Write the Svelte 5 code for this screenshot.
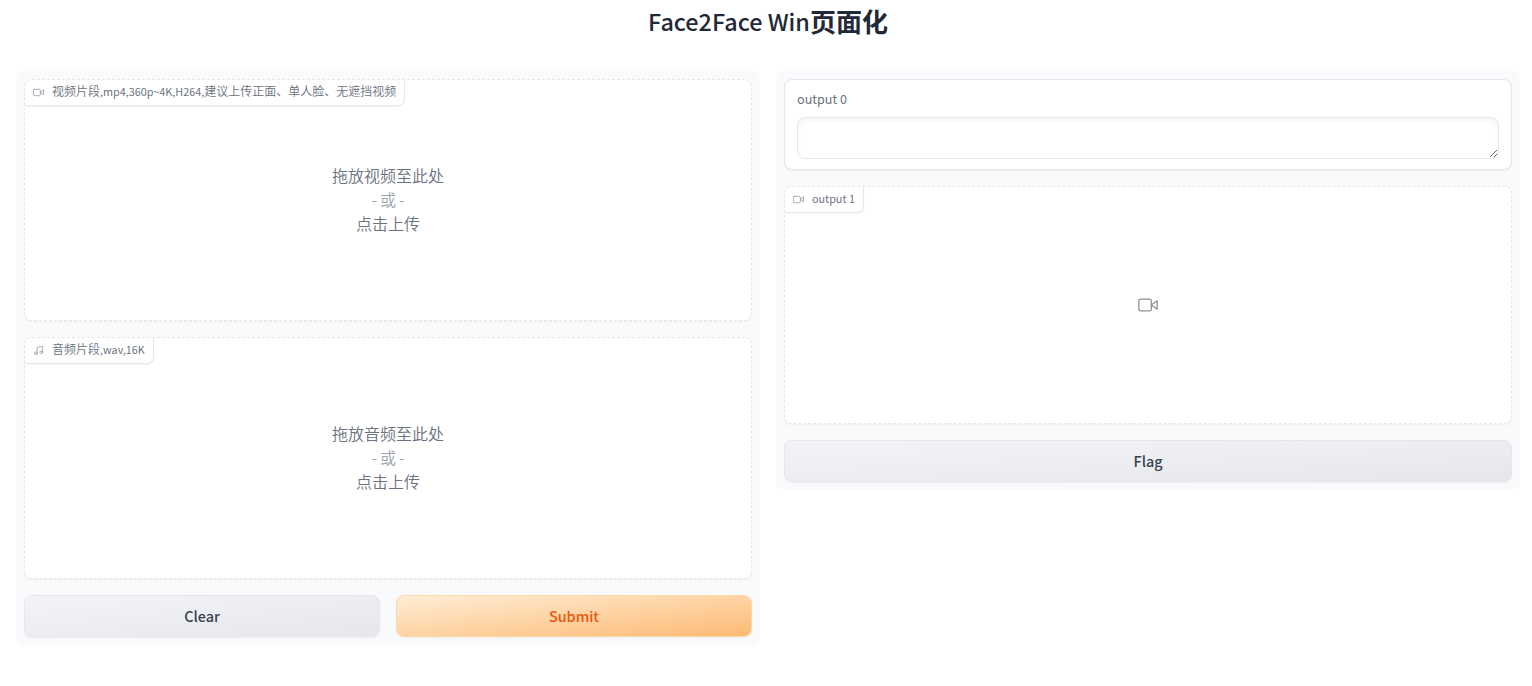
<script>
  const uploads = [
    {
      icon: 'video',
      label: [['视频片段', 1], [',mp4,360p~4K,H264,', 0], ['建议上传正面、单人脸、无遮挡视频', 1]],
      prompt: '拖放视频至此处'
    },
    { icon: 'music', label: [['音频片段', 1], [',wav,16K', 0]], prompt: '拖放音频至此处' }
  ];
</script>

{#snippet icon(name)}
  <svg viewBox="0 0 24 24" fill="none" stroke="currentColor" stroke-width="1.5" stroke-linecap="round" stroke-linejoin="round">
    {#if name === 'video'}
      <polygon points="23 7 16 12 23 17 23 7" />
      <rect x="1" y="5" width="15" height="14" rx="2" ry="2" />
    {:else}
      <path d="M9 18V5l12-2v13" />
      <circle cx="6" cy="18" r="3" />
      <circle cx="18" cy="16" r="3" />
    {/if}
  </svg>
{/snippet}

<main>
  <h1><span class="latin">Face2Face Win</span>页面化</h1>
  <div class="columns">
    <section class="panel">
      {#each uploads as u}
        <div class="block upload">
          <div class="tag">
            {@render icon(u.icon)}
            <span class="text">{#each u.label as [part, cjk]}<span class={cjk ? 'han' : 'lat'}>{part}</span>{/each}</span>
          </div>
          <div class="prompt">
            <span>{u.prompt}</span>
            <span class="or">-<b>或</b>-</span>
            <span>点击上传</span>
          </div>
        </div>
      {/each}
      <div class="actions">
        <button>Clear</button>
        <button class="primary">Submit</button>
      </div>
    </section>
    <section class="panel">
      <div class="block field">
        <label for="out0">output 0</label>
        <textarea id="out0" readonly></textarea>
      </div>
      <div class="block player">
        <div class="tag">
          {@render icon('video')}
          <span class="text"><span class="lat">output 1</span></span>
        </div>
        <div class="empty">{@render icon('video')}</div>
      </div>
      <div class="actions"><button>Flag</button></div>
    </section>
  </div>
</main>

<style>
  :global(body) { background: #fff; overflow: hidden; }
  main {
    box-sizing: border-box;
    width: 1536px;
    height: 686px;
    padding: 0 16px;
    font-family: "Noto Sans CJK SC", sans-serif;
    color: #1f2937;
  }
  main * { box-sizing: border-box; }
  h1 {
    margin: 0;
    height: 71px;
    padding-top: 2px;
    font-size: 26px;
    line-height: 38px;
    font-weight: 700;
    text-align: center;
    white-space: nowrap;
  }
  .latin { font-size: 23.4px; font-weight: 500; vertical-align: 1px; line-height: 30px; }
  .columns { display: flex; gap: 16px; align-items: flex-start; }
  .panel {
    flex: 1;
    display: flex;
    flex-direction: column;
    gap: 16px;
    padding: 8px;
    border-radius: 8px;
    background: #f9fafb;
  }
  .block {
    position: relative;
    border: 1px dashed #e5e7eb;
    border-radius: 8px;
    background: #fff;
    box-shadow: 0 1px 2px rgba(0, 0, 0, .05);
  }
  .upload { height: 242px; display: flex; align-items: center; justify-content: center; }
  .player { height: 238px; display: flex; align-items: center; justify-content: center; }
  .tag {
    position: absolute;
    top: 0;
    left: 0;
    display: flex;
    align-items: center;
    height: 26px;
    padding: 0 8px;
    border: solid #e5e7eb;
    border-width: 0 1px 1px 0;
    border-radius: 7px 0 7px 0;
    background: #fff;
    color: #6b7280;
    box-shadow: 0 1px 2px rgba(0, 0, 0, .05);
    white-space: nowrap;
  }
  .tag svg { width: 11px; height: 11px; margin: 0 8px 1px 0; opacity: .8; }
  .text { line-height: 22px; height: 26px; font-size: 12px; }
  .han { font-size: 12px; font-weight: 350; }
  .lat { font-size: 10.8px; }
  .prompt {
    display: flex;
    flex-direction: column;
    align-items: center;
    font-size: 16px;
    font-weight: 350;
    line-height: 24px;
    padding-bottom: 2px;
    color: #6b7280;
  }
  .or { color: #9ca3af; display: flex; gap: 3px; }
  .or b { font-weight: inherit; }
  .empty svg { display: block; width: 20px; height: 20px; color: #8f9095; }
  .field { border-style: solid; height: 91px; padding: 9px 12px; }
  label { display: block; height: 28px; font-size: 12.6px; line-height: 20px; color: #6b7280; }
  textarea {
    display: block;
    width: 100%;
    height: 42px;
    border: 1px solid #e5e7eb;
    border-radius: 8px;
    background: #fff;
    box-shadow: inset 0 2px 4px rgba(0, 0, 0, .05);
    outline: none;
    resize: vertical;
  }
  .actions { display: flex; gap: 16px; }
  button {
    flex: 1;
    height: 42px;
    padding: 0;
    border: 1px solid #e5e7eb;
    border-radius: 8px;
    background: linear-gradient(to bottom right, #f3f4f6, #e5e7eb);
    color: #374151;
    font: 500 14.4px/40px "Noto Sans CJK SC", sans-serif;
    box-shadow: 0 1px 2px rgba(0, 0, 0, .05);
  }
  .primary {
    border-color: #fed7aa;
    background: linear-gradient(to bottom right, #ffedd5, #fdba74);
    color: #ea580c;
  }
</style>
